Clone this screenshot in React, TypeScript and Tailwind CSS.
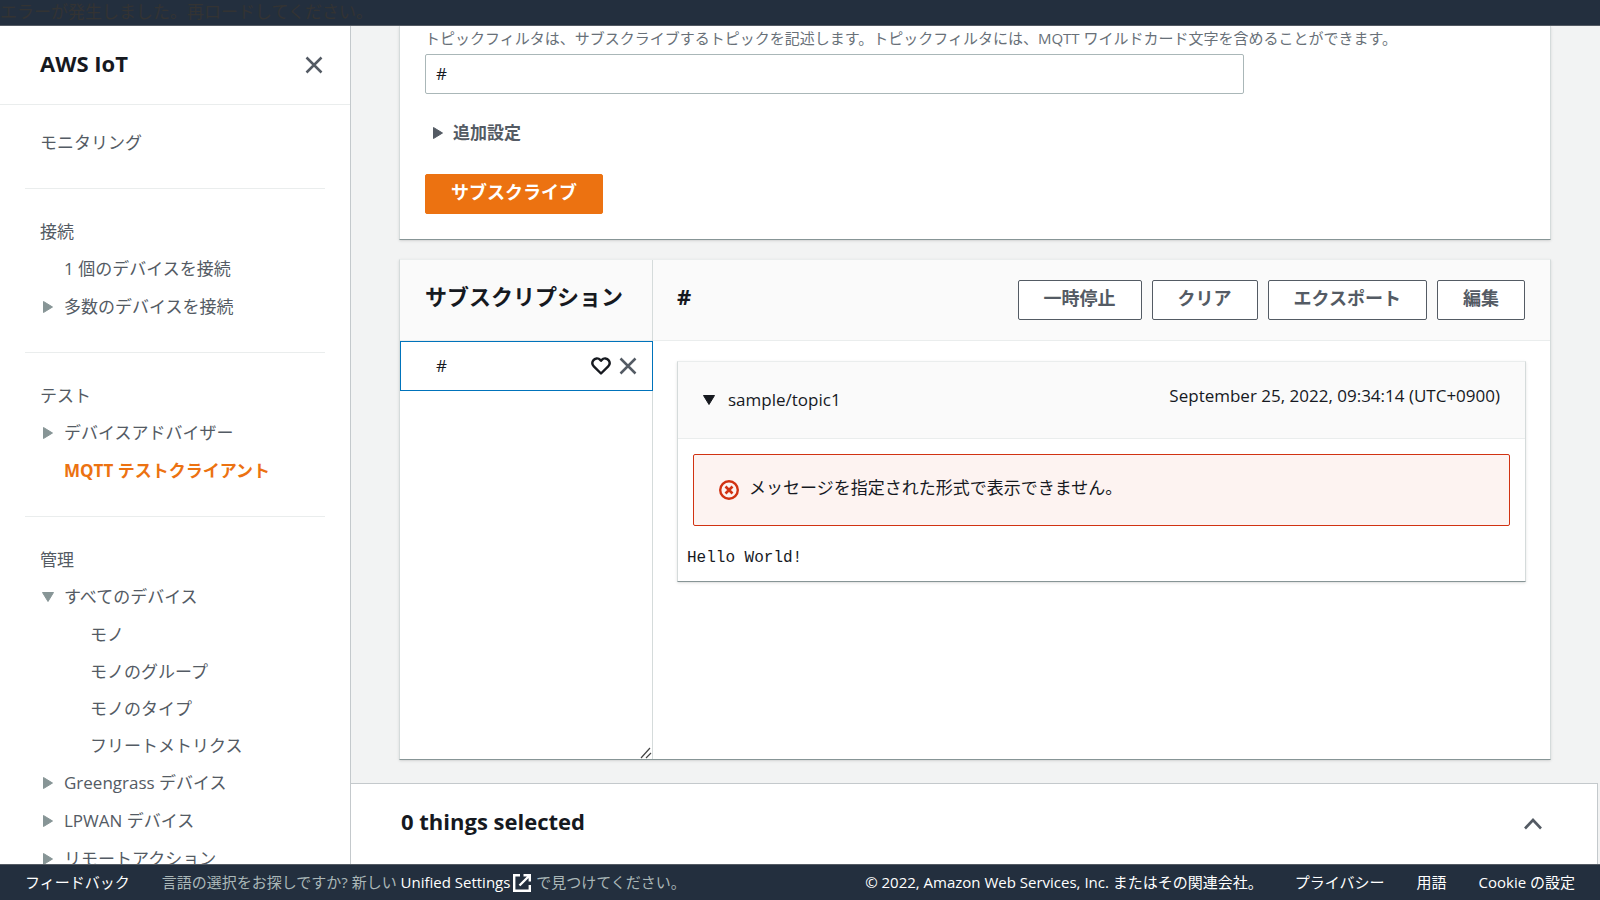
import React from 'react';

const fontStack = "font-['Open_Sans','Noto_Sans_CJK_JP',sans-serif]";

type NavItem = {
  label: string;
  state?: 'open' | 'closed';
  active?: boolean;
  children?: string[];
};

type NavSection = {
  title: string;
  items: NavItem[];
};

const sections: NavSection[] = [
  { title: 'モニタリング', items: [] },
  {
    title: '接続',
    items: [
      { label: '1 個のデバイスを接続' },
      { label: '多数のデバイスを接続', state: 'closed' },
    ],
  },
  {
    title: 'テスト',
    items: [
      { label: 'デバイスアドバイザー', state: 'closed' },
      { label: 'MQTT テストクライアント', active: true },
    ],
  },
  {
    title: '管理',
    items: [
      {
        label: 'すべてのデバイス',
        state: 'open',
        children: ['モノ', 'モノのグループ', 'モノのタイプ', 'フリートメトリクス'],
      },
      { label: 'Greengrass デバイス', state: 'closed' },
      { label: 'LPWAN デバイス', state: 'closed' },
      { label: 'リモートアクション', state: 'closed' },
    ],
  },
];

const Caret = ({ open = false, className = '' }: { open?: boolean; className?: string }) => (
  <svg viewBox="0 0 14 14" className={`h-3.5 w-3.5 shrink-0 ${className}`} fill="currentColor" stroke="currentColor" strokeLinejoin="round" aria-hidden="true">
    {open ? <path d="M1.5 2.5h11L7 11.5z" /> : <path d="M2.5 1.5v11L11.5 7z" />}
  </svg>
);

const CloseIcon = () => (
  <svg viewBox="0 0 20 20" className="h-5 w-5" fill="none" stroke="#545b64" strokeWidth="2.5" aria-hidden="true">
    <path d="M2.5 2.5l15 15M17.5 2.5l-15 15" />
  </svg>
);

const HeartIcon = () => (
  <svg viewBox="0 0 20 20" className="h-5 w-5" fill="none" stroke="#16191f" strokeWidth="2.4" strokeLinejoin="round" aria-hidden="true">
    <path d="M10 17.5L2.8 10.3C1.3 8.8 1 6.3 2.2 4.5C3.9 2 7.3 1.7 9.2 3.9L10 4.8L10.8 3.9C12.7 1.7 16.1 2 17.8 4.5C19 6.3 18.7 8.8 17.2 10.3Z" />
  </svg>
);

const ErrorIcon = () => (
  <svg viewBox="0 0 20 20" className="h-5 w-5 shrink-0" fill="none" stroke="#d13212" strokeWidth="2.4" aria-hidden="true">
    <circle cx="10" cy="10" r="8.8" />
    <path d="M6.5 6.5l7 7M13.5 6.5l-7 7" strokeWidth="2.6" />
  </svg>
);

const ExternalIcon = () => (
  <svg viewBox="0 0 20 20" className="h-5 w-5" fill="none" stroke="white" strokeWidth="2.4" aria-hidden="true">
    <path d="M8 2.2H2.2V17.8H17.8V12" />
    <path d="M11.5 2.2H17.8V8.5M17.5 2.5L7.5 12.5" />
  </svg>
);

const NavLink = ({ item }: { item: NavItem }) => (
  <li>
    <div className="flex h-[38px] items-center">
      <span className="flex w-6 items-center">
        {item.state && (
          <button type="button" aria-label={item.label} className="flex text-[#879596]">
            <Caret open={item.state === 'open'} className="ml-px" />
          </button>
        )}
      </span>
      <a href="#" className={item.active ? 'font-bold text-[#ec7211]' : ''}>
        {item.label}
      </a>
    </div>
    {item.children && (
      <ul className="pl-[50px]">
        {item.children.map((child) => (
          <li key={child} className="flex h-[37px] items-center">
            <a href="#">{child}</a>
          </li>
        ))}
      </ul>
    )}
  </li>
);

const Sidebar = () => (
  <aside className="flex w-[351px] shrink-0 flex-col overflow-hidden border-r border-[#c4c9cc] bg-white">
    <div className="flex h-[79px] shrink-0 items-center justify-between border-b border-[#eaeded] pr-[26px] pl-10">
      <h2 className="pb-1 text-[22px] font-bold text-[#16191f]">AWS IoT</h2>
      <button type="button" aria-label="閉じる">
        <CloseIcon />
      </button>
    </div>
    <nav className="px-[25px] text-[17px] text-[#545b64]">
      {sections.map((section, i) => (
        <section
          key={section.title}
          className={`px-[15px] ${i === 0 ? 'pt-[19px] pb-[27px]' : 'border-t border-[#eaeded] pt-6 pb-[26px]'}`}
        >
          <h3 className="flex h-[37px] items-center">{section.title}</h3>
          <ul>
            {section.items.map((item) => (
              <NavLink key={item.label} item={item} />
            ))}
          </ul>
        </section>
      ))}
    </nav>
  </aside>
);

const OutlineButton = ({ children }: { children: React.ReactNode }) => (
  <button
    type="button"
    className="h-10 rounded-xs border border-[#545b64] bg-white px-[25px] pb-1 text-lg leading-6 font-bold text-[#545b64]"
  >
    {children}
  </button>
);

const SubscribeCard = () => (
  <section className="border-x border-b border-x-[#d5dbdb] border-b-[#879596] bg-white px-[25px] pb-[25px] shadow-sm">
    <label htmlFor="topic-filter" className="block h-7 text-[15px] leading-6 text-[#687078]">
      トピックフィルタは、サブスクライブするトピックを記述します。トピックフィルタには、MQTT ワイルドカード文字を含めることができます。
    </label>
    <input
      id="topic-filter"
      type="text"
      defaultValue="#"
      className="block h-10 w-full max-w-[819px] rounded-xs border border-[#aab7b8] px-2.5 pb-0.5 text-[17px] text-[#16191f]"
    />
    <button type="button" className="mt-[25px] flex h-7 items-center gap-2 pl-1.5 text-[17px] font-bold text-[#545b64]">
      <Caret />
      追加設定
    </button>
    <button
      type="button"
      className="mt-[27px] h-10 rounded-xs border border-[#ec7211] bg-[#ec7211] px-[25px] pb-1 text-lg leading-6 font-bold text-white"
    >
      サブスクライブ
    </button>
  </section>
);

const Message = () => (
  <article className="border border-t-[#eaeded] border-x-[#d5dbdb] border-b-[#879596] shadow-sm">
    <header className="flex h-[77px] items-center justify-between border-b border-[#eaeded] bg-[#fafafa] pr-[25px] pl-6">
      <button type="button" className="flex items-center gap-3 text-[17px] text-[#16191f]">
        <Caret open />
        sample/topic1
      </button>
      <time className="pb-2 text-[17px]">September 25, 2022, 09:34:14 (UTC+0900)</time>
    </header>
    <div className="px-[15px] pt-[15px]">
      <div role="alert" className="flex h-[72px] items-center gap-2.5 rounded-xs border border-[#d13212] bg-[#fdf3f1] px-[25px] text-[17px]">
        <ErrorIcon />
        <span className="pb-1">メッセージを指定された形式で表示できません。</span>
      </div>
    </div>
    <pre className="px-[9px] pt-5 pb-[11px] font-['Liberation_Mono',monospace] text-base leading-6">Hello World!</pre>
  </article>
);

const SubscriptionsCard = () => (
  <section className="flex flex-1 border border-t-[#eaeded] border-x-[#d5dbdb] border-b-[#879596] bg-white shadow-sm">
    <div className="flex w-[253px] shrink-0 flex-col border-r border-[#d5dbdb]">
      <div className="flex h-[81px] items-center border-b border-[#eaeded] bg-[#fafafa] pb-2 pl-[25px]">
        <h2 className="text-[22px] font-bold">サブスクリプション</h2>
      </div>
      <div className="-mr-px flex h-[50px] items-center border border-[#0073bb] pr-3.5 pl-[35px]">
        <a href="#" className="flex-1 text-[17px]">#</a>
        <button type="button" aria-label="お気に入り" className="mr-[7px]">
          <HeartIcon />
        </button>
        <button type="button" aria-label="削除">
          <CloseIcon />
        </button>
      </div>
      <div className="flex flex-1 items-end justify-end">
        <svg viewBox="0 0 12 12" className="h-3 w-3" stroke="#444" strokeWidth="1.2" aria-hidden="true">
          <path d="M1 11L10 1M6 11L11 6" />
        </svg>
      </div>
    </div>
    <div className="flex-1">
      <div className="flex h-[81px] items-center justify-between border-b border-[#eaeded] bg-[#fafafa] pr-[25px] pl-6">
        <h2 className="pb-2 text-[22px] font-bold">#</h2>
        <div className="flex gap-2.5">
          <OutlineButton>一時停止</OutlineButton>
          <OutlineButton>クリア</OutlineButton>
          <OutlineButton>エクスポート</OutlineButton>
          <OutlineButton>編集</OutlineButton>
        </div>
      </div>
      <div className="px-6 pt-5">
        <Message />
      </div>
    </div>
  </section>
);

const SelectionPanel = () => (
  <section className="mr-0.5 flex h-[81px] shrink-0 items-center justify-between border-t border-r border-[#c4c9cc] bg-white pr-[54px] pl-[50px]">
    <h2 className="pb-1.5 text-[22px] font-bold">0 things selected</h2>
    <button type="button" aria-label="展開">
      <svg viewBox="0 0 20 20" className="h-5 w-5" fill="none" stroke="#545b64" strokeWidth="2.6" aria-hidden="true">
        <path d="M2 14.5L10 6L18 14.5" />
      </svg>
    </button>
  </section>
);

const Footer = () => (
  <footer className="flex h-9 shrink-0 items-center justify-between border-t border-[#545b64] bg-[#232f3e] px-[25px] text-[15px] text-white">
    <div className="flex items-center gap-8">
      <a href="#">フィードバック</a>
      <p className="flex items-center text-[#aab7b8]">
        言語の選択をお探しですか? 新しい&nbsp;
        <a href="#" className="flex items-center gap-0.5 font-medium text-white">
          Unified Settings
          <ExternalIcon />
        </a>
        &nbsp;で見つけてください。
      </p>
    </div>
    <div className="flex items-center gap-8">
      <span>© 2022, Amazon Web Services, Inc. またはその関連会社。</span>
      <a href="#">プライバシー</a>
      <a href="#">用語</a>
      <a href="#">Cookie の設定</a>
    </div>
  </footer>
);

const App = () => {
  return (
    <div className={`flex h-screen flex-col overflow-hidden text-[#16191f] ${fontStack}`}>
      <header className="h-[26px] shrink-0 border-b border-[#545b64] bg-[#232f3e] text-[17px] leading-6 text-[#333]">
        エラーが発生しました。再ロードしてください。
      </header>
      <div className="flex min-h-0 flex-1">
        <Sidebar />
        <div className="flex min-w-0 flex-1 flex-col bg-[#f2f3f3]">
          <main className="flex min-h-0 flex-1 flex-col gap-[19px] pr-[49px] pb-[23px] pl-12">
            <SubscribeCard />
            <SubscriptionsCard />
          </main>
          <SelectionPanel />
        </div>
      </div>
      <Footer />
    </div>
  );
};

export default App;
